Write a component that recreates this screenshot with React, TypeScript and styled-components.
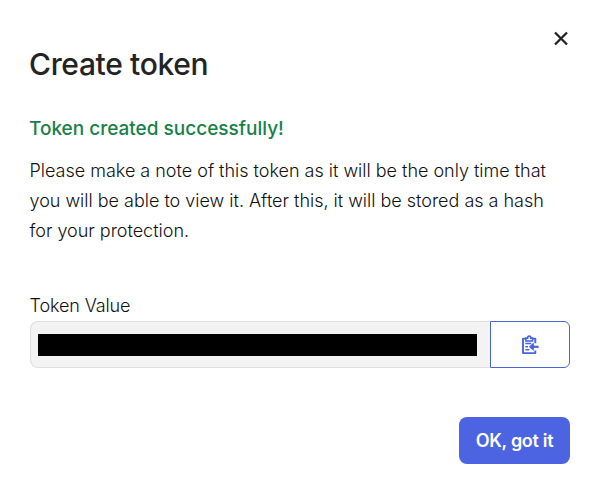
import React from "react";
import styled, { createGlobalStyle } from "styled-components";

const GlobalStyle = createGlobalStyle`
  * { box-sizing: border-box; }
  body { margin: 0; background: #fff; }
`;

const Dialog = styled.section`
  width: 597px;
  height: 492px;
  padding: 28px 27px 28px 30px;
  display: flex;
  flex-direction: column;
  background: #fff;
  color: #232323;
  font-family: Inter, "Liberation Sans", sans-serif;
  font-size: 18px;
  overflow: hidden;
`;

const CloseButton = styled.button`
  align-self: flex-end;
  display: flex;
  width: 20px;
  height: 20px;
  margin: 0 -1px 0 0;
  padding: 0;
  border: 0;
  background: none;
  color: #232323;
`;

const Title = styled.h1`
  margin: -4px 0 0 -1px;
  font-size: 30px;
  font-weight: 500;
  line-height: 40px;
  letter-spacing: -0.35px;
  white-space: nowrap;
`;

const Status = styled.h2`
  margin: 31px 0 0 -1px;
  font-size: 19px;
  font-weight: 500;
  line-height: 28px;
  letter-spacing: 0;
  color: #188149;
  white-space: nowrap;
`;

const Message = styled.p`
  margin: 13px 0 0 -0.5px;
  line-height: 30px;
  font-weight: 300;
  letter-spacing: -0.01px;
  color: #111;
`;

const Line = styled.span`
  display: block;
  white-space: nowrap;
`;

const Label = styled.label`
  margin: 49px 0 0 -0.5px;
  line-height: 22px;
  height: 22px;
  font-weight: 300;
  letter-spacing: -0.12px;
  color: #111;
  white-space: nowrap;
`;

const TokenGroup = styled.div`
  display: flex;
  height: 47px;
  margin-top: 4px;
`;

const TokenField = styled.div`
  display: flex;
  align-items: center;
  width: 460px;
  padding: 1px 13px 0 7px;
  border: 1px solid #dfdfdf;
  border-right: 0;
  border-radius: 8px 0 0 8px;
  background: #f3f3f3;
`;

const Redaction = styled.div`
  flex: 1;
  height: 22px;
  background: #000;
`;

const CopyButton = styled.button`
  display: flex;
  align-items: center;
  justify-content: center;
  flex: 1;
  padding: 0;
  border: 1px solid #4b63dc;
  border-radius: 0 6px 6px 0;
  background: #fff;
  color: #4b63df;
`;

const ConfirmButton = styled.button`
  align-self: flex-end;
  width: 111px;
  height: 47px;
  margin-top: 49px;
  padding: 0;
  border: 0;
  border-radius: 8px;
  background: #4c64e1;
  color: #fff;
  font: 600 18px/47px Inter, "Liberation Sans", sans-serif;
  letter-spacing: -0.3px;
  white-space: nowrap;
`;

const CloseIcon = () => (
  <svg width="20" height="20" viewBox="0 0 20 20" fill="none" stroke="currentColor" strokeWidth="2.3">
    <path d="M4 4.5 16 16.5M16 4.5 4 16.5" />
  </svg>
);

const ClipboardIcon = () => (
  <svg width="18" height="20" viewBox="0 0 18 20" fill="none" stroke="currentColor">
    <path d="M5 3.6H2V18.1h12.3v-2.7M11.3 3.6h3v4.6" strokeWidth="1.9" strokeLinejoin="round" />
    <path d="M4.9 6V3.1h1.7c0-2.6 3.2-2.6 3.2 0h1.7V6z" strokeWidth="1.6" />
    <path d="M4.3 8.6h6M4.3 11.7h2.7M4.3 14.8h4" strokeWidth="1.5" />
    <path d="M17.6 11.8H10" strokeWidth="2.2" />
    <path d="M12.8 7.6 7.8 11.8l5 4.2z" fill="currentColor" stroke="none" />
  </svg>
);

export default function App() {
  return (
    <>
      <GlobalStyle />
      <Dialog role="dialog" aria-labelledby="dialog-title">
        <CloseButton aria-label="Close"><CloseIcon /></CloseButton>
        <Title id="dialog-title">Create token</Title>
        <Status>Token created successfully!</Status>
        <Message>
          <Line>Please make a note of this token as it will be the only time that</Line>
          <Line>you will be able to view it. After this, it will be stored as a hash</Line>
          <Line>for your protection.</Line>
        </Message>
        <Label>Token Value</Label>
        <TokenGroup>
          <TokenField><Redaction /></TokenField>
          <CopyButton aria-label="Copy token"><ClipboardIcon /></CopyButton>
        </TokenGroup>
        <ConfirmButton>OK, got it</ConfirmButton>
      </Dialog>
    </>
  );
}
